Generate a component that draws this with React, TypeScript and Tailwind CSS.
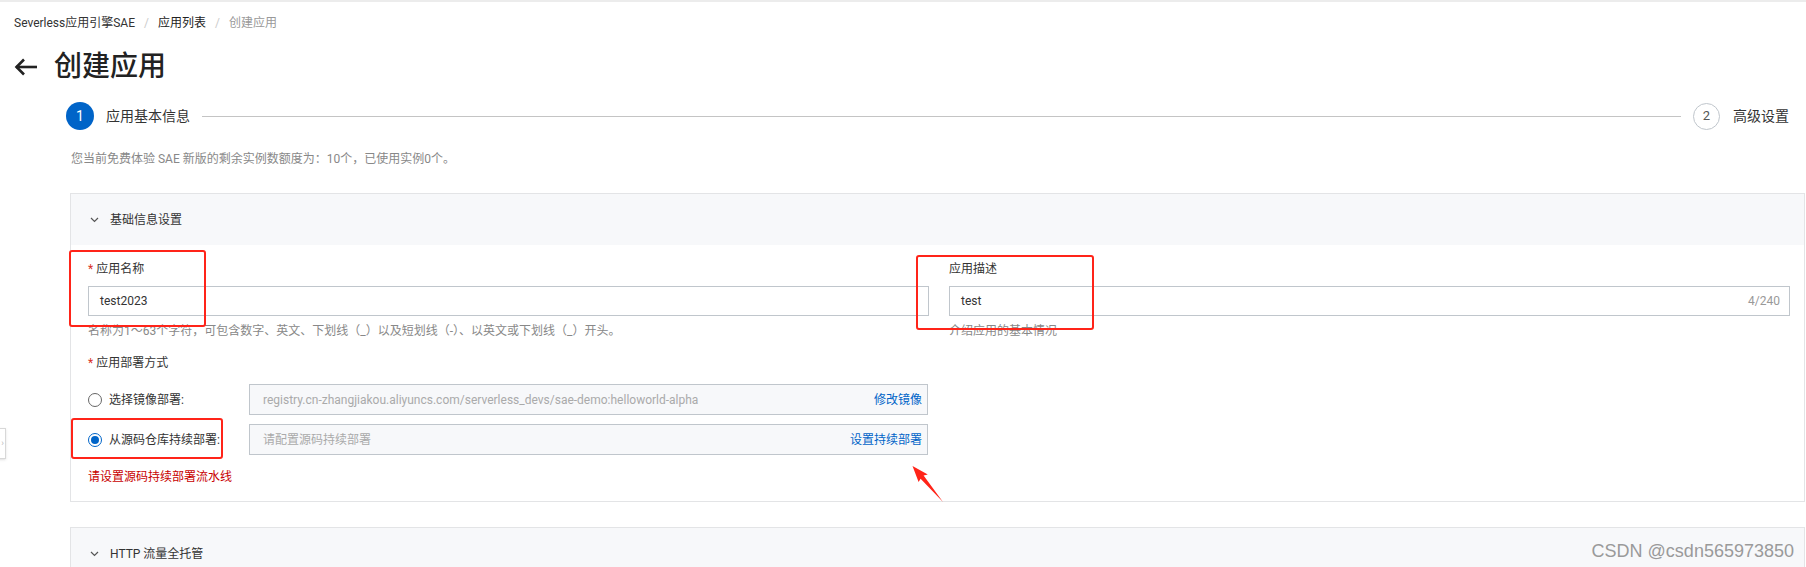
import React from "react";

const FONT = "font-['Roboto','Noto_Sans_CJK_SC',sans-serif]";

function Chevron() {
  return (
    <svg width="9" height="6" viewBox="0 0 9 6" className="shrink-0">
      <polyline points="1,1 4.5,4.5 8,1" fill="none" stroke="#555" strokeWidth="1.2" />
    </svg>
  );
}

function PanelHeader({ title }: { title: string }) {
  return (
    <div className="flex h-[51px] items-center gap-[11px] bg-[#f7f8fa] pl-[19px] text-[12px] text-[#333]">
      <Chevron />
      <span>{title}</span>
    </div>
  );
}

function Radio({ checked }: { checked?: boolean }) {
  return checked ? (
    <span className="flex h-[14px] w-[14px] shrink-0 items-center justify-center rounded-full border border-[#0064c8] bg-white">
      <span className="h-[8px] w-[8px] rounded-full bg-[#0064c8]" />
    </span>
  ) : (
    <span className="h-[14px] w-[14px] shrink-0 rounded-full border border-[#666] bg-white" />
  );
}

function DeployRow({
  checked,
  label,
  value,
  placeholder,
  action,
}: {
  checked?: boolean;
  label: string;
  value?: string;
  placeholder?: string;
  action: string;
}) {
  return (
    <div className="flex items-center">
      <div className="flex w-[161px] items-center gap-[7px]">
        <Radio checked={checked} />
        <span className="text-[12px] text-[#333]">{label}</span>
      </div>
      <div className="flex h-[31px] flex-1 items-center justify-between border border-[#c0c6cc] bg-[#f7f8fa] pl-[13px] pr-[5px] text-[12px]">
        <span className="text-[#aaa]">{value ?? placeholder}</span>
        <span className="text-[#0064c8]">{action}</span>
      </div>
    </div>
  );
}

export default function App() {
  return (
    <div className={`relative h-[567px] w-full overflow-hidden border-t-2 border-[#ececec] bg-white ${FONT}`}>
      {/* breadcrumb */}
      <div className="ml-[14px] mt-[13px] flex h-[16px] items-center gap-[9px] text-[12px] leading-[16px]">
        <span className="text-[#333]">Severless应用引擎SAE</span>
        <span className="text-[#ccc]">/</span>
        <span className="text-[#222]">应用列表</span>
        <span className="text-[#ccc]">/</span>
        <span className="text-[#999]">创建应用</span>
      </div>

      {/* title */}
      <div className="ml-[14px] mt-[18px] flex h-[36px] items-center gap-[16px]">
        <svg width="24" height="18" viewBox="0 0 24 18">
          <line x1="2" y1="9" x2="23" y2="9" stroke="#222" strokeWidth="2.6" />
          <polyline points="10,1.5 2.5,9 10,16.5" fill="none" stroke="#222" strokeWidth="2.6" />
        </svg>
        <h1 className="text-[28px] font-medium leading-[36px] text-[#222]">创建应用</h1>
      </div>

      {/* steps */}
      <div className="ml-[66px] mr-[17px] mt-[17px] flex h-[28px] items-center">
        <span className="flex h-[28px] w-[28px] items-center justify-center rounded-full bg-[#0064c8] text-[14px] text-white">1</span>
        <span className="ml-[12px] text-[14px] text-[#333]">应用基本信息</span>
        <span className="mx-[12px] h-px flex-1 bg-[#c4c4c4]" />
        <span className="flex h-[27px] w-[27px] items-center justify-center rounded-full border border-[#c0c6cc] text-[13px] text-[#555]">2</span>
        <span className="ml-[13px] text-[14px] text-[#333]">高级设置</span>
      </div>

      {/* notice */}
      <div className="ml-[71px] mt-[20px] text-[12px] leading-[18px] text-[#888]">
        您当前免费体验 SAE 新版的剩余实例数额度为：10个，已使用实例0个。
      </div>

      {/* basic info panel */}
      <div className="ml-[70px] mr-[1px] mt-[25px] border border-[#e3e4e6]">
        <PanelHeader title="基础信息设置" />
        <div className="pb-[16px] pl-[17px] pr-[14px] pt-[16px]">
          <div className="grid grid-cols-2 gap-[20px]">
            <div>
              <div className="text-[12px] leading-[16px] text-[#333]">
                <span className="text-[#d93026]">*</span> 应用名称
              </div>
              <div className="mt-[9px] flex h-[30px] items-center border border-[#c0c6cc] pl-[11px] text-[12px] text-[#333]">
                test2023
              </div>
              <div className="mt-[7px] text-[12px] leading-[16px] text-[#888]">
                名称为1～63个字符，可包含数字、英文、下划线（_）以及短划线（-）、以英文或下划线（_）开头。
              </div>
            </div>
            <div>
              <div className="text-[12px] leading-[16px] text-[#333]">应用描述</div>
              <div className="mt-[9px] flex h-[30px] items-center justify-between border border-[#c0c6cc] pl-[11px] pr-[9px] text-[12px]">
                <span className="text-[#333]">test</span>
                <span className="text-[#999]">4/240</span>
              </div>
              <div className="mt-[7px] text-[12px] leading-[16px] text-[#888]">介绍应用的基本情况</div>
            </div>
          </div>

          <div className="w-[840px]">
            <div className="mt-[16px] text-[12px] leading-[16px] text-[#333]">
              <span className="text-[#d93026]">*</span> 应用部署方式
            </div>
            <div className="mt-[13px] flex flex-col gap-[9px]">
              <DeployRow
                label="选择镜像部署:"
                value="registry.cn-zhangjiakou.aliyuncs.com/serverless_devs/sae-demo:helloworld-alpha"
                action="修改镜像"
              />
              <DeployRow checked label="从源码仓库持续部署:" placeholder="请配置源码持续部署" action="设置持续部署" />
            </div>
            <div className="mt-[14px] text-[12px] leading-[16px] text-[#c80000]">请设置源码持续部署流水线</div>
          </div>
        </div>
      </div>

      {/* http panel */}
      <div className="ml-[70px] mr-[1px] mt-[25px] border border-[#e3e4e6]">
        <PanelHeader title="HTTP 流量全托管" />
      </div>

      {/* left floating tab */}
      <div className="absolute left-[-4px] top-[426px] flex h-[31px] w-[10px] items-center justify-end border border-[#d8d8d8] bg-white pr-[1px] text-[9px] text-[#bbb] shadow-sm">
        ›
      </div>

      {/* annotations */}
      <div className="absolute left-[69px] top-[248px] h-[77px] w-[137px] rounded-[3px] border-2 border-[#ff2419]" />
      <div className="absolute left-[916px] top-[253px] h-[75px] w-[178px] rounded-[3px] border-2 border-[#ff2419]" />
      <div className="absolute left-[71px] top-[416px] h-[41px] w-[152px] rounded-[3px] border-2 border-[#ff2419]" />
      <svg className="absolute left-[900px] top-[455px]" width="50" height="50" viewBox="900 455 50 50">
        <polygon
          points="912.5,464 918.6,480.1 920.6,476.8 943,500 923.6,473.4 927.8,472.5"
          fill="#ff2419"
        />
      </svg>

      {/* watermark */}
      <div className="absolute right-[12px] top-[538px] font-['Liberation_Sans',sans-serif] text-[18px] leading-[22px] text-[#9a9a9a]">
        CSDN @csdn565973850
      </div>
    </div>
  );
}
